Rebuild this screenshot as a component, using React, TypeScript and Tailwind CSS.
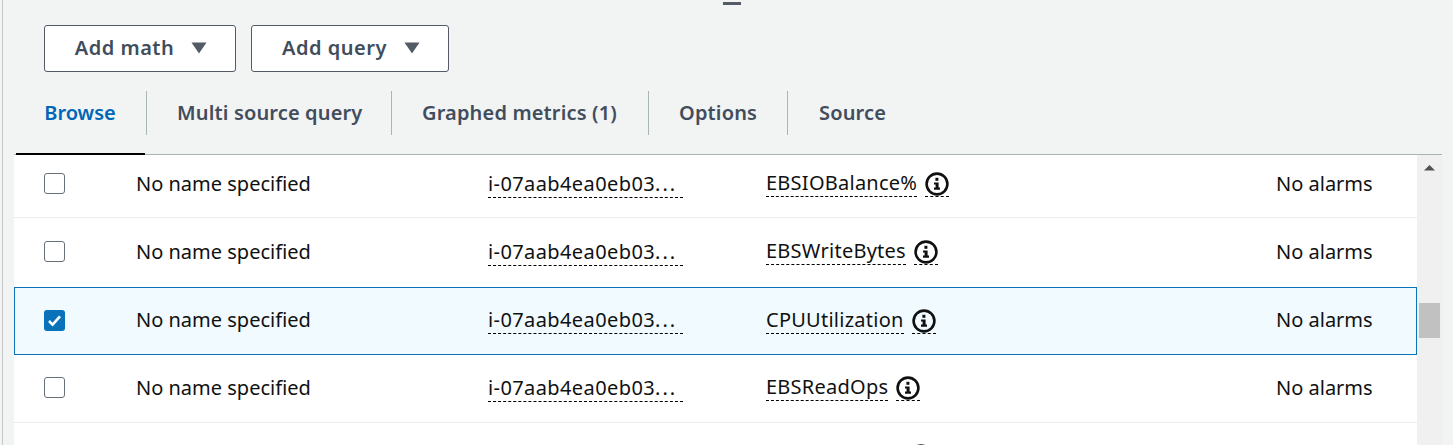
// Metrics picker: toolbar, tabs and the browse table, scrolled part way down.
const font = "font-['Noto_Sans',sans-serif]";

const tabs = [
  { label: "Multi source query", width: "w-[245px] pl-[30px]" },
  { label: "Graphed metrics (1)", width: "w-[257px] pl-[30px]" },
  { label: "Options", width: "w-[139px] pl-[30px]" },
  { label: "Source", width: "w-[130px] pl-[31px]" },
];

const rows = [
  { metric: "EBSIOBalance%", checked: false, height: "h-[63px] pb-[5px] border-b border-[#eaeded]" },
  { metric: "EBSWriteBytes", checked: false, height: "h-[69px] pb-[2px]" },
  { metric: "CPUUtilization", checked: true, height: "h-[68px] pb-[2px] border border-[#0972b9] bg-[#f1faff]" },
  { metric: "EBSReadOps", checked: false, height: "h-[68px] pb-[2px] border-b border-[#eaeded]" },
];

function Caret() {
  return (
    <svg width="16" height="12" viewBox="0 0 16 12" className="ml-[17px] mt-[1px]">
      <path d="M0.5 0.5h15L8 11.5z" fill="#545b64" />
    </svg>
  );
}

function InfoGlyph() {
  return (
    <svg width="24" height="24" viewBox="0 0 24 24">
      <circle cx="12" cy="12" r="10.4" fill="none" stroke="#0f1111" strokeWidth="2.6" />
      <rect x="10.4" y="5.8" width="3" height="3" fill="#0f1111" />
      <path d="M9 10.4h4.6v5.2h1.4v2.2H9v-2.2h1.6v-3H9z" fill="#0f1111" />
    </svg>
  );
}

function Checkbox({ checked }: { checked: boolean }) {
  if (checked) {
    return (
      <span className="flex h-[21px] w-[21px] items-center justify-center rounded-[3px] bg-[#0972b9]">
        <svg width="15" height="13" viewBox="0 0 15 13">
          <path d="M2 7l3.6 3.6L13 2.4" fill="none" stroke="white" strokeWidth="2.6" />
        </svg>
      </span>
    );
  }
  return <span className="block h-[21px] w-[21px] rounded-[3px] border border-[#687078] bg-white" />;
}

export default function App() {
  return (
    <div className={`${font} h-[445px] w-[1453px] overflow-hidden bg-[#f2f3f3] pl-[2px]`}>
      <div className="h-[445px] border-l border-[#c4c8c8] pl-[11px]">
        <div className="ml-[709px] h-[5px] w-[18px] pt-[2px]">
          <div className="h-[3px] bg-[#545b64]" />
        </div>

        <div className="ml-[30px] mt-[20px] flex gap-[15px]">
          <button className="flex h-[47px] w-[192px] items-center justify-center rounded-[3px] border border-[#545b64] bg-white pb-[2px] pl-[2px] text-[20px] font-semibold tracking-[0.5px] text-[#414d5c]">
            Add math
            <Caret />
          </button>
          <button className="flex h-[47px] w-[198px] items-center justify-center rounded-[3px] border border-[#545b64] bg-white pb-[2px] pl-[2px] text-[20px] font-semibold tracking-[0.5px] text-[#414d5c]">
            Add query
            <Caret />
          </button>
        </div>

        <div className="relative mr-[11px] mt-[19px] flex h-[64px] items-start border-b border-[#a9b5b5]">
          <div className="flex h-[44px] w-[133px] items-center justify-center border-r border-[#a9b5b5] text-[20px] font-semibold text-[#0066b8]">
            Browse
          </div>
          {tabs.map((t, i) => (
            <div
              key={t.label}
              className={`flex h-[44px] items-center whitespace-nowrap text-[20px] font-semibold tracking-[0.15px] text-[#414d5c] ${t.width} ${
                i < tabs.length - 1 ? "border-r border-[#a9b5b5]" : ""
              }`}
            >
              {t.label}
            </div>
          ))}
          <div className="absolute bottom-[-1px] left-[2px] h-[2px] w-[129px] bg-black" />
        </div>

        <div className="flex">
          <div className="w-[1403px] bg-white text-[20px] text-[#0f1111]">
            {rows.map((r) => (
              <div
                key={r.metric}
                className={`grid grid-cols-[92px_352px_278px_510px_1fr] items-center ${
                  r.checked ? "pl-[29px]" : "pl-[30px]"
                } ${r.height}`}
              >
                <Checkbox checked={r.checked} />
                <span>No name specified</span>
                <span className="inline-block w-[195px] border-b border-dashed border-black leading-[27px] tracking-[0.4px]">
                  i-07aab4ea0eb03<span className="tracking-[2px]">...</span>
                </span>
                <span className="flex items-end">
                  <span className="border-b border-dashed border-black leading-[26px] tracking-[0.25px]">
                    {r.metric}
                  </span>
                  <span className="ml-2 inline-flex h-[25px] border-b border-dashed border-black">
                    <InfoGlyph />
                  </span>
                </span>
                <span>No alarms</span>
              </div>
            ))}
            {/* only the top of the next row's info icon is in view */}
            <div className="pl-[895px] pt-[21px]">
              <InfoGlyph />
            </div>
          </div>
          <div className="h-[290px] w-[25px] bg-[#f0f0f0]">
            <svg width="25" height="30" viewBox="0 0 25 30">
              <path d="M12.5 10l-5.5 5.5h11z" fill="#505050" />
            </svg>
            <div className="ml-[2px] mt-[118px] h-[35px] w-[21px] bg-[#c1c1c1]" />
          </div>
        </div>
      </div>
    </div>
  );
}
